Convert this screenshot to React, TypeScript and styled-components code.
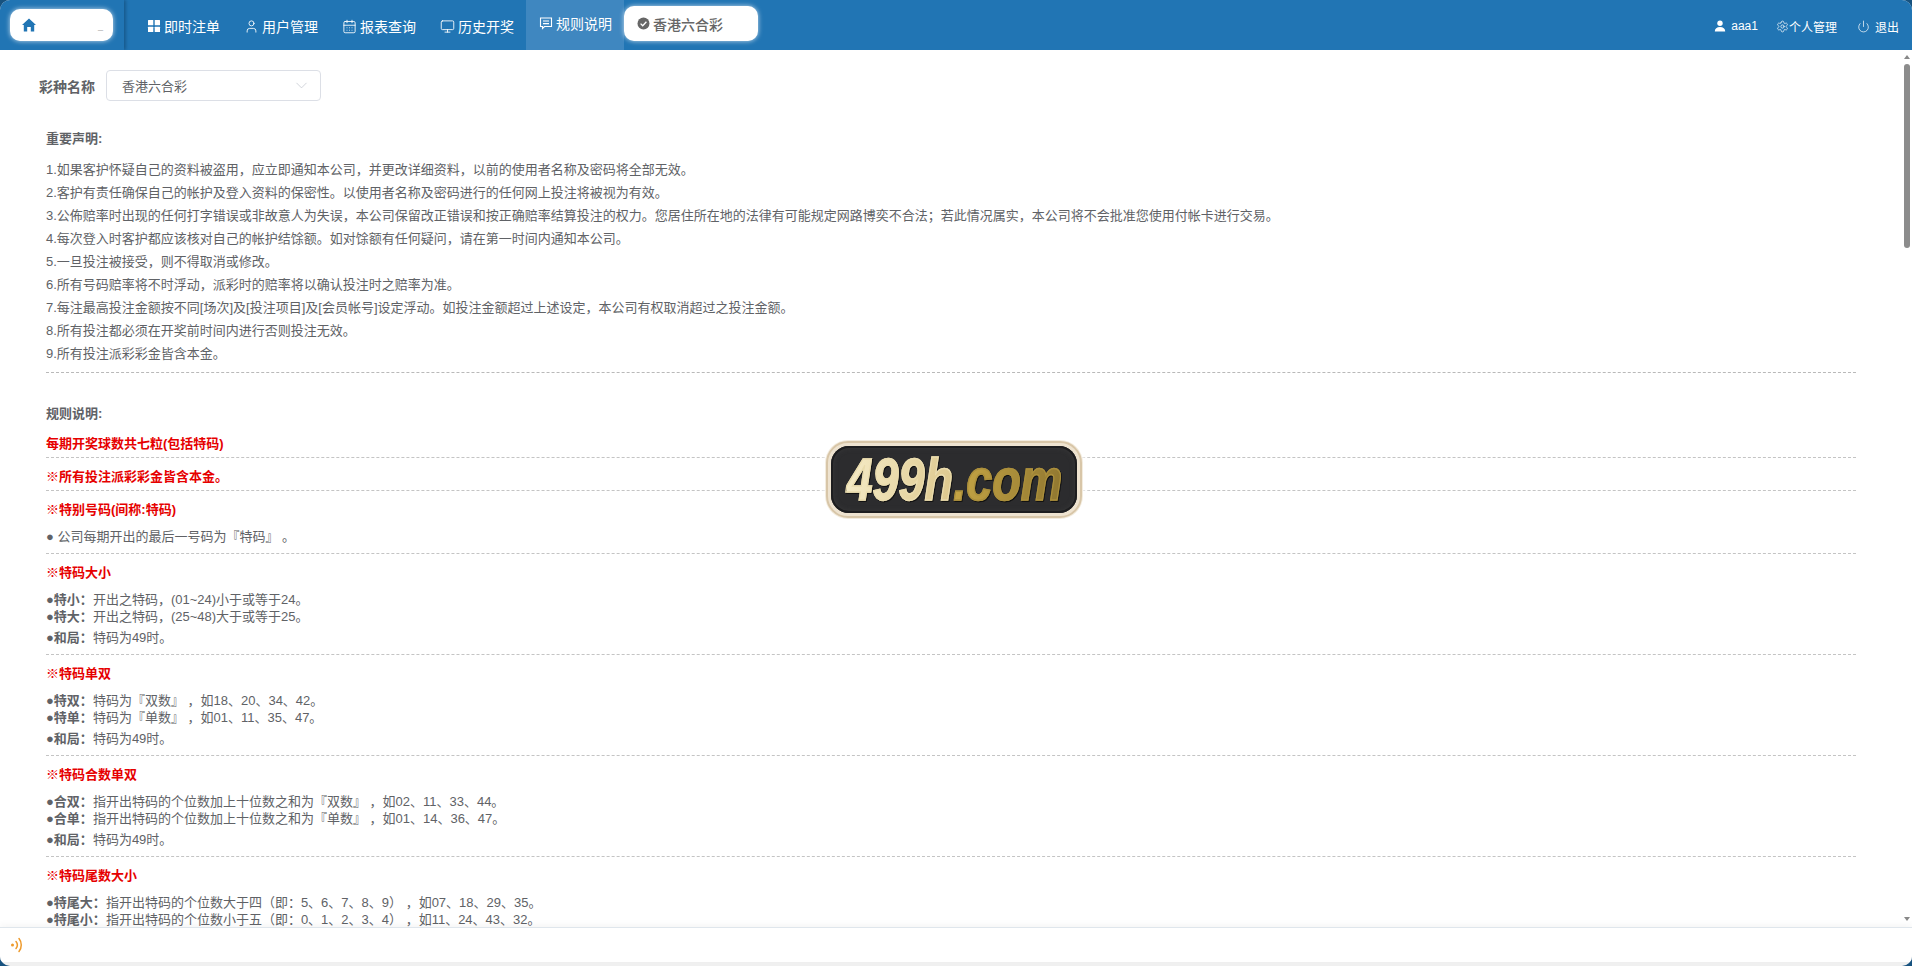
import React from 'react'
import styled, { createGlobalStyle } from 'styled-components'
import { User, CalendarDays, Monitor, Settings, Power, ChevronDown } from 'lucide-react'

const GlobalStyle = createGlobalStyle`
    html, body {
        margin: 0;
        padding: 0;
        height: 100%;
        overflow: hidden;
    }
    body {
        font-family: "Liberation Sans", "Noto Sans CJK SC", sans-serif;
    }
`

const Frame = styled.div`
    position: relative;
    height: 966px;
    background-color: #17527f;
`

const Inner = styled.div`
    height: 100%;
    display: flex;
    flex-direction: column;
    border-radius: 10px;
    overflow: hidden;
    background-color: #f0f0f0;
`

const Header = styled.header`
    flex: none;
    height: 50px;
    display: flex;
    align-items: stretch;
    background-color: #2175b4;
    color: #fff;
`

const HomeZone = styled.div`
    flex: none;
    width: 124px;
    margin-right: 11px;
    display: flex;
    align-items: center;
    padding-left: 10px;
    box-sizing: border-box;
    box-shadow: 2px 0 3px rgba(16, 70, 112, 0.55);
`

const Pill = styled.div<{ $width: number }>`
    width: ${props => props.$width}px;
    height: 35px;
    display: flex;
    align-items: center;
    box-sizing: border-box;
    background-color: #fff;
    border-radius: 10px;
    box-shadow: 0 0 5px rgba(255, 255, 255, 0.75);
    color: #666;
    font-size: 14px;
`

const HomePill = styled(Pill)`
    position: relative;
    height: 32px;
    padding-left: 11px;
    color: #2175b4;
`

const Dash = styled.span`
    position: absolute;
    left: 88px;
    top: 11px;
    font-size: 9px;
    line-height: 12px;
    color: #aaa;
`

const NavItem = styled.div<{ $active?: boolean }>`
    display: flex;
    align-items: center;
    gap: 3px;
    padding: ${props => (props.$active ? '0 12px 5px 13px' : '2px 12px 0')};
    background-color: ${props => (props.$active ? '#3f87c0' : 'transparent')};
    font-size: 14px;

    svg {
        flex: none;
    }
`

const TabWrap = styled.div`
    display: flex;
    align-items: center;
    padding-bottom: 3px;
`

const TabPill = styled(Pill)`
    padding-left: 13px;
    gap: 3px;
    font-weight: 500;
`

const UserArea = styled.div`
    margin-left: auto;
    display: flex;
    align-items: center;
    padding: 2px 13px 0 0;
    font-size: 12px;
`

const UserItem = styled.div<{ $gap: number; $left: number }>`
    display: flex;
    align-items: center;
    gap: ${props => props.$gap}px;
    margin-left: ${props => props.$left}px;
`

const MainArea = styled.div`
    position: relative;
    flex: 1;
    min-height: 0;
`

const Scroller = styled.main`
    height: 100%;
    overflow: hidden;
    background-color: #fff;
    color: #606266;
`

const ScrollRail = styled.div`
    position: absolute;
    top: 0;
    right: 0;
    bottom: 0;
    width: 12px;
    display: flex;
    flex-direction: column;
    align-items: center;
    padding-left: 2px;
    box-sizing: border-box;
`

const ArrowUp = styled.div`
    flex: none;
    width: 0;
    height: 0;
    margin: 5px 0 5px;
    border-left: 3.5px solid transparent;
    border-right: 3.5px solid transparent;
    border-bottom: 4px solid #888;
`

const ArrowDown = styled.div`
    flex: none;
    width: 0;
    height: 0;
    margin-top: auto;
    margin-bottom: 6px;
    border-left: 3.5px solid transparent;
    border-right: 3.5px solid transparent;
    border-top: 4px solid #888;
`

const ScrollThumb = styled.div`
    flex: none;
    width: 6px;
    height: 184px;
    border-radius: 3px;
    background-color: #8c8c8c;
`

const Content = styled.div`
    box-sizing: border-box;
    padding: 20px 56px 0 46px;
`

const FilterRow = styled.div`
    display: flex;
    align-items: center;
    margin: 0 0 26px -7px;
`

const FilterLabel = styled.label`
    font-size: 14px;
    font-weight: 700;
    margin-right: 11px;
`

const Select = styled.div`
    width: 215px;
    height: 31px;
    box-sizing: border-box;
    display: flex;
    align-items: center;
    justify-content: space-between;
    padding: 0 9px 0 15px;
    border: 1px solid #dcdfe6;
    border-radius: 4px;
    font-size: 13px;
    color: #606266;

    svg {
        color: #c0c4cc;
    }
`

const Notice = styled.section`
    font-size: 13px;
    line-height: 23px;
    padding-bottom: 7px;
    border-bottom: 1px dashed #b9b9b9;
`

const NoticeTitle = styled.h3`
    margin: 0 0 8px;
    font-size: 13px;
    line-height: 23px;
    font-weight: 700;
`

const NoticeLine = styled.p`
    margin: 0;
`

const RulesHeading = styled.h3`
    margin: 29px 0 0;
    font-size: 13px;
    line-height: 23px;
    font-weight: 700;
`

const Rule = styled.section<{ $bare?: boolean }>`
    padding: ${props => (props.$bare ? '7px 0 2px' : '7px 0 8px')};
    border-bottom: 1px dashed #c4c4c4;
`

const RuleTitle = styled.h4`
    margin: 0;
    font-size: 13px;
    line-height: 23px;
    font-weight: 700;
    color: #e60000;
`

const RuleBlock = styled.div`
    margin-top: 7px;
    font-size: 13px;
    line-height: 17px;

    & + & {
        margin-top: 4px;
    }
`

const RuleLine = styled.div`
    strong {
        font-weight: 700;
    }
`

const Footer = styled.footer`
    flex: none;
    height: 34px;
    display: flex;
    align-items: center;
    padding-left: 10px;
    margin-bottom: 4px;
    background-color: #fff;
    border-top: 1px solid #dfe6ec;
    box-shadow: 0 -3px 6px rgba(0, 0, 0, 0.035);
    position: relative;
`

const Logo = styled.div`
    position: absolute;
    left: 826px;
    top: 441px;
    width: 256px;
    height: 77px;
    box-sizing: border-box;
    display: flex;
    align-items: center;
    justify-content: center;
    border-radius: 22px;
    border: 2px solid #d8c6a8;
    background-color: #eee3d0;
    box-shadow: 0 0 0 1px #f3ecdf, 0 0 8px 3px #fff;
`

const LogoPlate = styled.div`
    width: 246px;
    height: 67px;
    display: flex;
    align-items: center;
    justify-content: center;
    border-radius: 18px;
    background-color: #2c2c2e;
    box-shadow: inset 0 0 0 2px #1d1d1f, inset 0 0 6px #444;
    overflow: hidden;
`

const LogoText = styled.div`
    display: flex;
    font-family: "Liberation Sans", sans-serif;
    font-size: 60px;
    line-height: 60px;
    font-weight: 700;
    font-style: italic;
    letter-spacing: 0;
    transform: scaleX(0.78);
    white-space: nowrap;
    filter: drop-shadow(1px 1px 0 #111);
`

const LogoPart = styled.span<{ $from: string; $to: string; $edge: string }>`
    background: linear-gradient(100deg, ${props => props.$from}, ${props => props.$to});
    -webkit-background-clip: text;
    background-clip: text;
    color: transparent;
    -webkit-text-stroke: 1.5px ${props => props.$edge};
`

const notices = [
    '1.如果客护怀疑自己的资料被盗用，应立即通知本公司，并更改详细资料，以前的使用者名称及密码将全部无效。',
    '2.客护有责任确保自己的帐护及登入资料的保密性。以使用者名称及密码进行的任何网上投注将被视为有效。',
    '3.公佈赔率时出现的任何打字错误或非故意人为失误，本公司保留改正错误和按正确赔率结算投注的权力。您居住所在地的法律有可能规定网路博奕不合法；若此情况属实，本公司将不会批准您使用付帐卡进行交易。',
    '4.每次登入时客护都应该核对自己的帐护结馀额。如对馀额有任何疑问，请在第一时间内通知本公司。',
    '5.一旦投注被接受，则不得取消或修改。',
    '6.所有号码赔率将不时浮动，派彩时的赔率将以确认投注时之赔率为准。',
    '7.每注最高投注金额按不同[场次]及[投注项目]及[会员帐号]设定浮动。如投注金额超过上述设定，本公司有权取消超过之投注金额。',
    '8.所有投注都必须在开奖前时间内进行否则投注无效。',
    '9.所有投注派彩彩金皆含本金。',
]

const draw = ['和局：', '特码为49时。']

const rules = [
    {
        title: '※特码大小',
        lines: [['特小：', '开出之特码，(01~24)小于或等于24。'], ['特大：', '开出之特码，(25~48)大于或等于25。']],
    },
    {
        title: '※特码单双',
        lines: [['特双：', '特码为『双数』 ，如18、20、34、42。'], ['特单：', '特码为『单数』 ，如01、11、35、47。']],
    },
    {
        title: '※特码合数单双',
        lines: [
            ['合双：', '指开出特码的个位数加上十位数之和为『双数』 ，如02、11、33、44。'],
            ['合单：', '指开出特码的个位数加上十位数之和为『单数』 ，如01、14、36、47。'],
        ],
    },
]

const HomeIcon = () => (
    <svg width="16" height="16" viewBox="0 0 16 16" fill="currentColor">
        <path d="M8 1.5L15 8h-1.8v6.5H9.8V10H6.2v4.5H2.8V8H1z" />
    </svg>
)

const GridIcon = () => (
    <svg width="14" height="14" viewBox="0 0 14 14" fill="currentColor">
        <rect x="1" y="1" width="5.3" height="5.3" rx="0.5" />
        <rect x="7.7" y="1" width="5.3" height="5.3" rx="0.5" />
        <rect x="1" y="7.7" width="5.3" height="5.3" rx="0.5" />
        <rect x="7.7" y="7.7" width="5.3" height="5.3" rx="0.5" />
    </svg>
)

const MessageIcon = () => (
    <svg width="14" height="14" viewBox="0 0 14 14" fill="none" stroke="currentColor" strokeWidth="1.1">
        <path d="M1.5 2h11v8.5H5.5L3.5 12.5v-2h-2z" />
        <path d="M4 5h6M4 7.6h6" />
    </svg>
)

const CheckIcon = () => (
    <svg width="13" height="13" viewBox="0 0 13 13">
        <circle cx="6.5" cy="6.5" r="6" fill="#666" />
        <path d="M3.6 6.6l2.1 2.1 3.7-4" fill="none" stroke="#fff" strokeWidth="1.3" />
    </svg>
)

const SoundIcon = () => (
    <svg width="14" height="16" viewBox="0 0 14 16" fill="none" stroke="#ee9a2c" strokeWidth="1.5" strokeLinecap="round">
        <circle cx="2.5" cy="8" r="1.5" fill="#ee9a2c" stroke="none" />
        <path d="M6 4.5c1.6 2 1.6 5 0 7" />
        <path d="M9 1.5c3 3.6 3 9.4 0 13" />
    </svg>
)

const App = () => {
    return (
        <Frame>
            <GlobalStyle />
            <Inner>
                <Header>
                    <HomeZone>
                        <HomePill $width={103}>
                            <HomeIcon />
                            <Dash>_</Dash>
                        </HomePill>
                    </HomeZone>
                    <NavItem><GridIcon />即时注单</NavItem>
                    <NavItem><User size={15} strokeWidth={1.4} />用户管理</NavItem>
                    <NavItem><CalendarDays size={15} strokeWidth={1.4} />报表查询</NavItem>
                    <NavItem><Monitor size={15} strokeWidth={1.4} />历史开奖</NavItem>
                    <NavItem $active><MessageIcon />规则说明</NavItem>
                    <TabWrap>
                        <TabPill $width={134}><CheckIcon />香港六合彩</TabPill>
                    </TabWrap>
                    <UserArea>
                        <UserItem $gap={5} $left={0}>
                            <svg width="12" height="12" viewBox="0 0 12 12" fill="currentColor">
                                <circle cx="6" cy="3.2" r="2.7" />
                                <path d="M0.8 11.5c0-3 2-4.6 5.2-4.6s5.2 1.6 5.2 4.6z" />
                            </svg>
                            aaa1
                        </UserItem>
                        <UserItem $gap={0} $left={18}><Settings size={13} strokeWidth={1.3} />个人管理</UserItem>
                        <UserItem $gap={5} $left={20}><Power size={13} strokeWidth={1.3} />退出</UserItem>
                    </UserArea>
                </Header>

                <MainArea>
                    <Scroller>
                        <Content>
                            <FilterRow>
                                <FilterLabel>彩种名称</FilterLabel>
                                <Select>香港六合彩<ChevronDown size={19} strokeWidth={0.9} /></Select>
                            </FilterRow>

                            <Notice>
                                <NoticeTitle>重要声明:</NoticeTitle>
                                {notices.map(line => <NoticeLine key={line}>{line}</NoticeLine>)}
                            </Notice>

                            <RulesHeading>规则说明:</RulesHeading>
                            <Rule $bare><RuleTitle>每期开奖球数共七粒(包括特码)</RuleTitle></Rule>
                            <Rule $bare><RuleTitle>※所有投注派彩彩金皆含本金。</RuleTitle></Rule>
                            <Rule>
                                <RuleTitle>※特别号码(间称:特码)</RuleTitle>
                                <RuleBlock>● 公司每期开出的最后一号码为『特码』 。</RuleBlock>
                            </Rule>
                            {rules.map(rule => (
                                <Rule key={rule.title}>
                                    <RuleTitle>{rule.title}</RuleTitle>
                                    <RuleBlock>
                                        {rule.lines.map(line => (
                                            <RuleLine key={line[0]}>●<strong>{line[0]}</strong>{line[1]}</RuleLine>
                                        ))}
                                    </RuleBlock>
                                    <RuleBlock>
                                        <RuleLine>●<strong>{draw[0]}</strong>{draw[1]}</RuleLine>
                                    </RuleBlock>
                                </Rule>
                            ))}
                            <Rule>
                                <RuleTitle>※特码尾数大小</RuleTitle>
                                <RuleBlock>
                                    <RuleLine>●<strong>特尾大：</strong>指开出特码的个位数大于四（即：5、6、7、8、9） ，如07、18、29、35。</RuleLine>
                                    <RuleLine>●<strong>特尾小：</strong>指开出特码的个位数小于五（即：0、1、2、3、4） ，如11、24、43、32。</RuleLine>
                                </RuleBlock>
                            </Rule>
                        </Content>
                    </Scroller>
                    <ScrollRail>
                        <ArrowUp />
                        <ScrollThumb />
                        <ArrowDown />
                    </ScrollRail>
                </MainArea>

                <Footer><SoundIcon /></Footer>
            </Inner>

            <Logo>
                <LogoPlate>
                    <LogoText>
                        <LogoPart $from="#f6ecc8" $to="#dcc78c" $edge="#eadcae">499h</LogoPart>
                        <LogoPart $from="#c9a846" $to="#8f7630" $edge="#ab8f3c">.com</LogoPart>
                    </LogoText>
                </LogoPlate>
            </Logo>
        </Frame>
    )
}

export default App
